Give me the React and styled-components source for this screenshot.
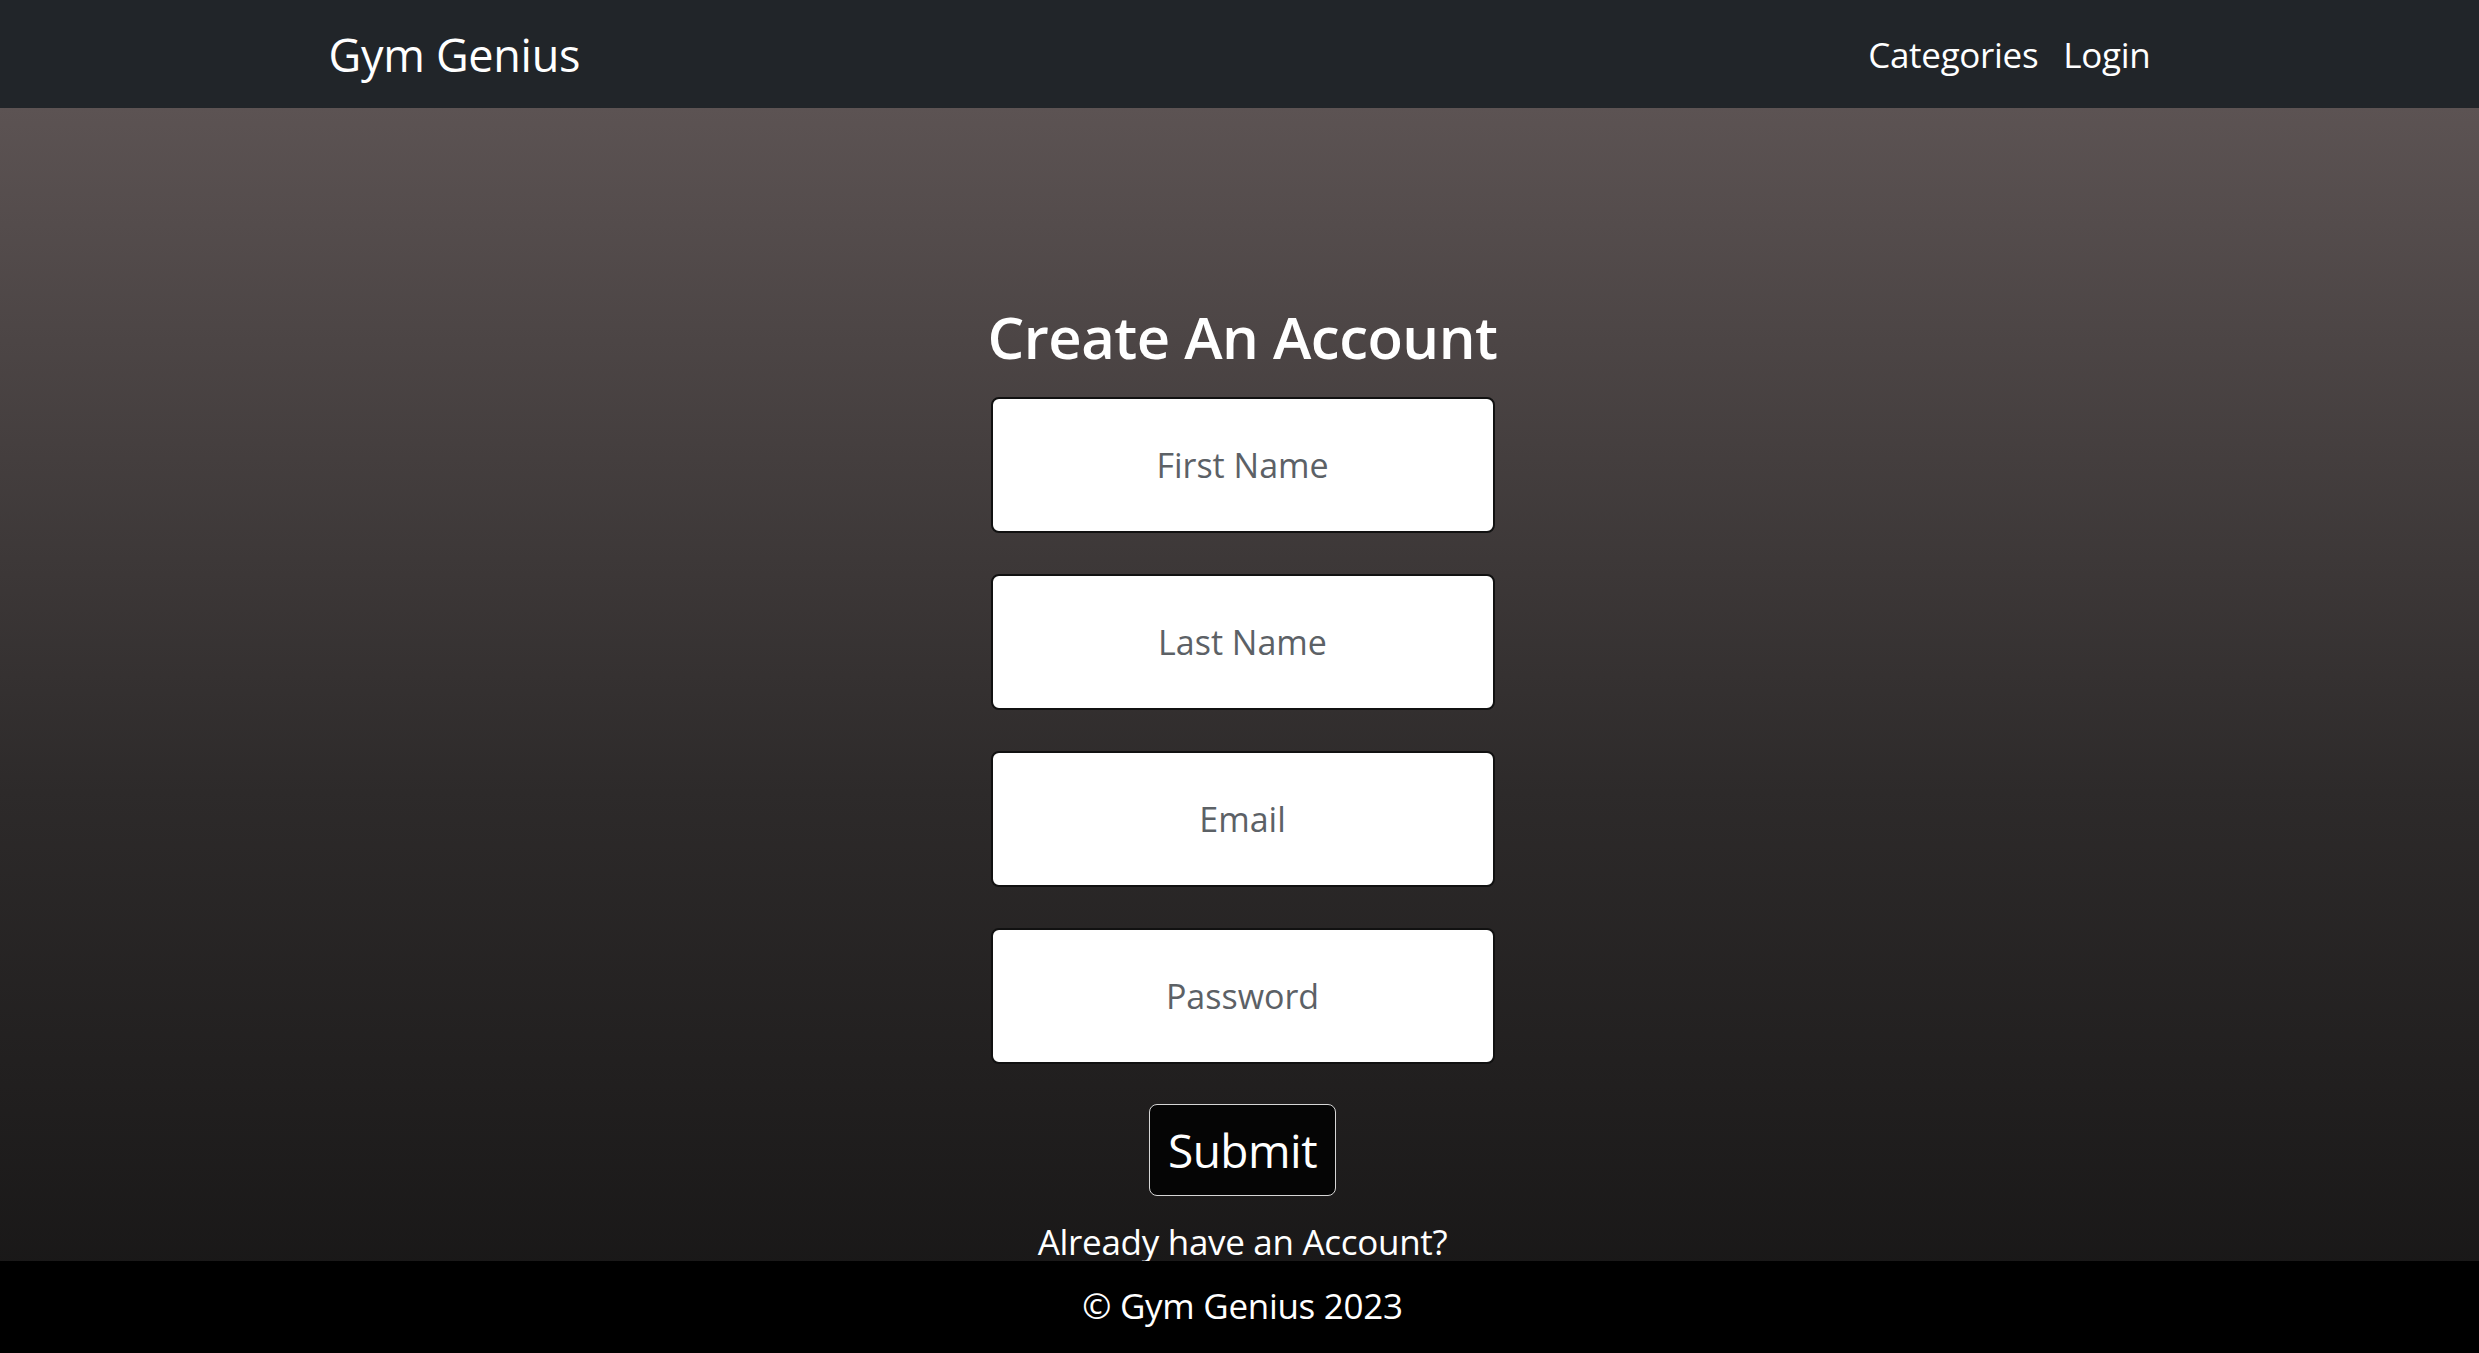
import React from "react";
import styled, { createGlobalStyle } from "styled-components";

const GlobalStyle = createGlobalStyle`
  * {
    box-sizing: border-box;
  }
  body {
    margin: 0;
    font-family: "Open Sans", "Noto Sans", sans-serif;
    color: #fff;
    background: #1a1919;
  }
`;

const Page = styled.div`
  min-height: 100vh;
  display: flex;
  flex-direction: column;
`;

const Navbar = styled.nav`
  height: 108px;
  background: #212529;
  display: flex;
  justify-content: center;
  align-items: center;
  flex-shrink: 0;

  .nav-center {
    width: 1822px;
    display: flex;
    justify-content: space-between;
    align-items: center;
  }
`;

const Brand = styled.a`
  color: #fff;
  font-size: 45px;
  text-decoration: none;
  letter-spacing: -0.3px;
`;

const NavLinks = styled.div`
  display: flex;
  align-items: center;
  gap: 25px;
`;

const NavLink = styled.a`
  color: #fff;
  font-size: 35px;
  text-decoration: none;
  letter-spacing: -0.3px;
`;

const Main = styled.main`
  flex: 1;
  background: linear-gradient(180deg, #5c5353 0%, #2d2a2a 55%, #161515 100%);
  display: flex;
  flex-direction: column;
  align-items: center;
  padding: 194px 0 0 6px;
`;

const Title = styled.h1`
  margin: 0 0 25px;
  font-size: 58px;
  font-weight: 600;
  line-height: 1.2;
  letter-spacing: -0.5px;
`;

const Form = styled.form`
  display: flex;
  flex-direction: column;
  align-items: center;
  gap: 41px;
`;

const Input = styled.input`
  width: 504px;
  height: 136px;
  border: 2px solid #111;
  border-radius: 8px;
  background: #fff;
  text-align: center;
  font-family: inherit;
  font-size: 34px;
  color: #212529;
  outline: none;

  &::placeholder {
    color: #5c6166;
  }
`;

const SubmitButton = styled.button`
  margin-top: -1px;
  height: 92px;
  padding: 0 18px;
  background: #050505;
  color: #fff;
  border: 1.5px solid #d6d6d6;
  border-radius: 8px;
  font-family: inherit;
  font-size: 46px;
  letter-spacing: -0.5px;
  cursor: pointer;
`;

const SwitchText = styled.p`
  margin: 22px 0 0;
  font-size: 35px;
  letter-spacing: -0.3px;
`;

const Footer = styled.footer`
  position: fixed;
  left: 0;
  right: 0;
  bottom: 0;
  height: 92px;
  padding: 0 0 4px 6px;
  background: #000;
  display: flex;
  justify-content: center;
  align-items: center;
  font-size: 35px;
  letter-spacing: -0.3px;
`;

const fields = ["First Name", "Last Name", "Email", "Password"];

export default function App() {
  return (
    <Page>
      <GlobalStyle />
      <Navbar>
        <div className="nav-center">
          <Brand href="#">Gym Genius</Brand>
          <NavLinks>
            <NavLink href="#">Categories</NavLink>
            <NavLink href="#">Login</NavLink>
          </NavLinks>
        </div>
      </Navbar>
      <Main>
        <Title>Create An Account</Title>
        <Form onSubmit={(e) => e.preventDefault()}>
          {fields.map((f) => (
            <Input
              key={f}
              type={f === "Password" ? "password" : "text"}
              placeholder={f}
            />
          ))}
          <SubmitButton type="submit">Submit</SubmitButton>
        </Form>
        <SwitchText>Already have an Account?</SwitchText>
      </Main>
      <Footer>© Gym Genius 2023</Footer>
    </Page>
  );
}
